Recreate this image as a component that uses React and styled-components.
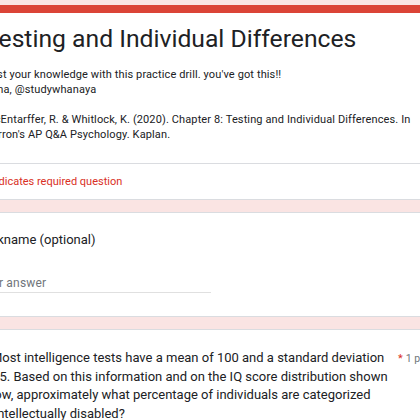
import React from "react";
import styled, { createGlobalStyle } from "styled-components";

const Global = createGlobalStyle`
  html, body { margin: 0; padding: 0; background: #fae4e3; overflow: hidden; }
  body { font-family: Roboto, "Liberation Sans", Arial, sans-serif; color: #202124; }
`;

const Page = styled.div`
  width: 490px;
  margin-left: -37px;
  padding-top: 5px;
  display: flex;
  flex-direction: column;
  gap: 12px;
`;

const Card = styled.section`
  background: #fff;
  border: 1px solid #dadce0;
  border-radius: 8px;
  overflow: hidden;
`;

const HeaderCard = styled(Card)`
  border-top: none;
`;

const Strip = styled.div`
  height: 8px;
  background: #db4437;
`;

const HeaderBody = styled.div`
  padding: 12px 24px 21px 21px;
  border-bottom: 1px solid #dadce0;
`;

const Title = styled.h1`
  margin: 0;
  font-family: Roboto, "Liberation Sans", sans-serif;
  font-weight: 400;
  font-size: 24.7px;
  line-height: 28px;
  color: #202124;
  white-space: nowrap;
`;

const Description = styled.div`
  margin-top: 14px;
  font-size: 11px;
  line-height: 15px;
  letter-spacing: 0.12px;
  white-space: pre;
  color: #202124;
`;

const RequiredNote = styled.div`
  padding: 10px 24px 9px 18px;
  font-size: 11px;
  line-height: 16px;
  color: #d93025;
`;

const QuestionBody = styled.div`
  padding: ${(p) => p.$pad};
`;

const QuestionTitle = styled.div`
  font-size: ${(p) => p.$size};
  line-height: ${(p) => p.$lh};
  color: #202124;
  white-space: pre;
  ${(p) => (p.$width ? `width: ${p.$width}px; flex: none;` : "")}
`;

const AnswerLine = styled.div`
  margin-top: 27px;
  width: 233px;
  border-bottom: 1px solid #e0e0e0;
  padding-bottom: 2px;
  font-size: 12px;
  line-height: 14px;
  letter-spacing: 0.2px;
  color: #70757a;
`;

const HeaderRow = styled.div`
  display: flex;
  align-items: baseline;
`;

const Star = styled.span`
  margin-left: 9px;
  color: #d93025;
  font-size: 11px;
`;

const Points = styled.span`
  margin-left: 3px;
  color: #70757a;
  font-size: 10.5px;
  white-space: nowrap;
`;

export default function App() {
  return (
    <>
      <Global />
      <Page>
        <HeaderCard>
          <Strip />
          <HeaderBody>
            <Title>Testing and Individual Differences</Title>
            <Description>
              {"Test your knowledge with this practice drill. you've got this!!\nhana, @studywhanaya\n\nMcEntarffer, R. & Whitlock, K. (2020). Chapter 8: Testing and Individual Differences. In\nBarron's AP Q&A Psychology. Kaplan."}
            </Description>
          </HeaderBody>
          <RequiredNote>* Indicates required question</RequiredNote>
        </HeaderCard>

        <Card>
          <QuestionBody $pad="18px 24px 23px 14px">
            <QuestionTitle $size="13px" $lh="18px">Nickname (optional)</QuestionTitle>
            <AnswerLine>Your answer</AnswerLine>
          </QuestionBody>
        </Card>

        <Card>
          <QuestionBody $pad="19px 24px 24px 13px">
            <HeaderRow>
              <QuestionTitle $size="13px" $lh="18.7px" $width={412}>
                {"1. Most intelligence tests have a mean of 100 and a standard deviation\nof 15. Based on this information and on the IQ score distribution shown\nbelow, approximately what percentage of individuals are categorized\nas intellectually disabled?"}
              </QuestionTitle>
              <Star>*</Star>
              <Points>1 point</Points>
            </HeaderRow>
          </QuestionBody>
        </Card>
      </Page>
    </>
  );
}
